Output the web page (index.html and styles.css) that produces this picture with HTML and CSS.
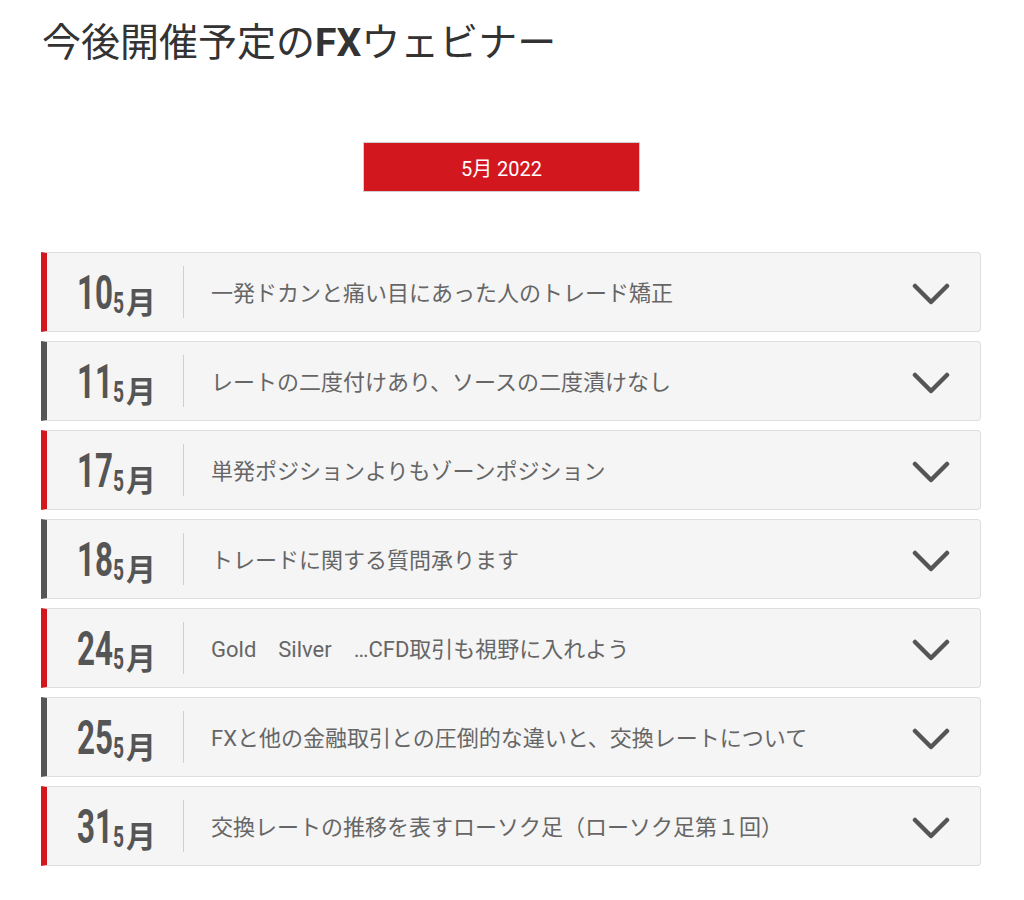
FILE: index.html
```html
<!DOCTYPE html>
<html lang="ja">
<head>
<meta charset="utf-8">
<title>今後開催予定のFXウェビナー</title>
<link rel="stylesheet" href="styles.css">
</head>
<body>
<div class="page">
  <h1 class="title">今後開催予定の<b>FX</b>ウェビナー</h1>
  <div class="month-bar"><span class="month-btn">5月 2022</span></div>
  <ul class="list">
    <li class="row red"><div class="date"><span class="day"><span class="sq">10</span></span><span class="mon"><span class="sq5">5</span>月</span></div><div class="sep"></div><div class="name">一発ドカンと痛い目にあった人のトレード矯正</div><svg class="chev" viewBox="0 0 38 22"><path d="M3 3 L19 19 L35 3" /></svg></li>
    <li class="row grey"><div class="date"><span class="day"><span class="sq">11</span></span><span class="mon"><span class="sq5">5</span>月</span></div><div class="sep"></div><div class="name">レートの二度付けあり、ソースの二度漬けなし</div><svg class="chev" viewBox="0 0 38 22"><path d="M3 3 L19 19 L35 3" /></svg></li>
    <li class="row red"><div class="date"><span class="day"><span class="sq">17</span></span><span class="mon"><span class="sq5">5</span>月</span></div><div class="sep"></div><div class="name">単発ポジションよりもゾーンポジション</div><svg class="chev" viewBox="0 0 38 22"><path d="M3 3 L19 19 L35 3" /></svg></li>
    <li class="row grey"><div class="date"><span class="day"><span class="sq">18</span></span><span class="mon"><span class="sq5">5</span>月</span></div><div class="sep"></div><div class="name">トレードに関する質問承ります</div><svg class="chev" viewBox="0 0 38 22"><path d="M3 3 L19 19 L35 3" /></svg></li>
    <li class="row red"><div class="date"><span class="day"><span class="sq">24</span></span><span class="mon"><span class="sq5">5</span>月</span></div><div class="sep"></div><div class="name">Gold　Silver　…CFD取引も視野に入れよう</div><svg class="chev" viewBox="0 0 38 22"><path d="M3 3 L19 19 L35 3" /></svg></li>
    <li class="row grey"><div class="date"><span class="day"><span class="sq">25</span></span><span class="mon"><span class="sq5">5</span>月</span></div><div class="sep"></div><div class="name">FXと他の金融取引との圧倒的な違いと、交換レートについて</div><svg class="chev" viewBox="0 0 38 22"><path d="M3 3 L19 19 L35 3" /></svg></li>
    <li class="row red"><div class="date"><span class="day"><span class="sq">31</span></span><span class="mon"><span class="sq5">5</span>月</span></div><div class="sep"></div><div class="name">交換レートの推移を表すローソク足（ローソク足第１回）</div><svg class="chev" viewBox="0 0 38 22"><path d="M3 3 L19 19 L35 3" /></svg></li>
  </ul>
</div>
</body>
</html>
```

FILE: styles.css
```css
html, body {
  margin: 0;
  padding: 0;
  background: #ffffff;
}
body {
  font-family: Roboto, "Noto Sans CJK JP", sans-serif;
  color: #333;
}
.page {
  padding: 17px 43px 0 41px;
}
.title {
  margin: 0 0 0 1px;
  font-size: 39px;
  font-weight: 400;
  line-height: 52px;
  color: #333;
}
.title b {
  font-weight: 700;
}
.month-bar {
  display: flex;
  margin-top: 73px;
  padding-left: 322px;
}
.month-btn {
  display: flex;
  align-items: center;
  justify-content: center;
  width: 275px;
  height: 48px;
  background: #d3171f;
  border: 1px solid #d0d0d0;
  color: #fff;
  font-size: 20px;
}
.list {
  list-style: none;
  margin: 60px 0 0 0;
  padding: 0;
  display: flex;
  flex-direction: column;
  gap: 9px;
}
.row {
  display: flex;
  align-items: center;
  background: #f5f5f5;
  border: 1px solid #dedede;
  border-left: 6px solid #d3171f;
  border-radius: 0 4px 4px 0;
  box-sizing: border-box;
  height: 80px;
}
.row.grey {
  border-left-color: #555;
}
.date {
  width: 136px;
  padding-left: 30px;
  box-sizing: border-box;
  display: flex;
  align-items: baseline;
  color: #555;
  font-weight: 700;
}
.day {
  width: 36px;
  font-size: 49px;
  line-height: 1;
}
.sq {
  display: inline-block;
  transform: scaleX(0.64);
  transform-origin: left center;
}
.mon {
  font-size: 30px;
  line-height: 1;
  position: relative;
  top: 4px;
  font-family: "Noto Sans CJK JP", sans-serif;
}
.sq5 {
  display: inline-block;
  width: 13px;
  font-family: Roboto, sans-serif;
  transform: scaleX(0.64);
  transform-origin: left center;
}
.sep {
  width: 1px;
  height: 52px;
  background: #cfcfcf;
}
.name {
  flex: 1;
  padding-left: 27px;
  padding-bottom: 2px;
  font-size: 22px;
  color: #666;
}
.chev {
  width: 38px;
  height: 22px;
  margin-top: 4px;
  margin-right: 30px;
  fill: none;
  stroke: #555;
  stroke-width: 4.5;
  stroke-linecap: round;
  stroke-linejoin: round;
}
```
